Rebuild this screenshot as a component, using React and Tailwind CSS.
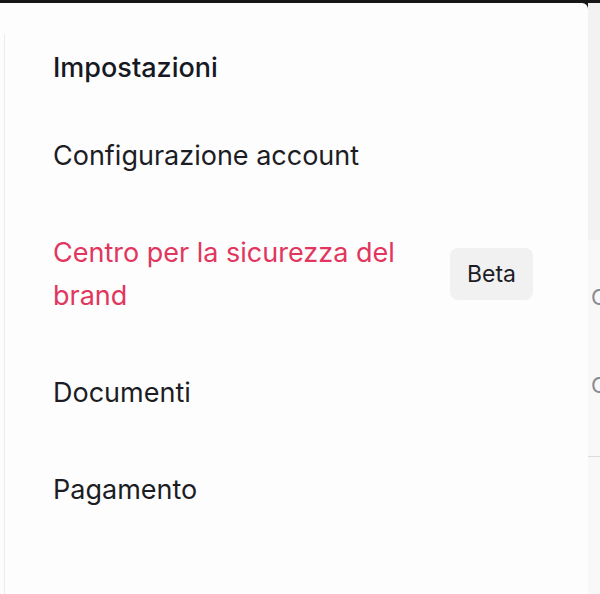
const items = [
  { label: 'Configurazione account' },
  { label: 'Centro per la sicurezza del brand', active: true, badge: 'Beta' },
  { label: 'Documenti' },
  { label: 'Pagamento' },
];

export default function App() {
  return (
    <div
      className="w-[600px] h-[594px] overflow-hidden bg-[#161616] flex flex-col"
      style={{ fontFamily: 'Inter, "Noto Sans", sans-serif' }}
    >
      <div className="h-[3px] shrink-0" />
      <div className="flex flex-1 min-h-0">
        {/* Settings panel */}
        <div className="w-[588px] shrink-0 bg-[#fdfdfd] rounded-tr-md pl-[4px] pt-[31px]">
          <div className="h-full border-l border-[#ececec] pl-[48px] pr-[55px]">
            <h2 className="text-[27px] leading-[43px] font-medium text-[#161823] pt-[12px] pb-[18px]">
              Impostazioni
            </h2>
            <ul>
              {items.map((item) => (
                <li
                  key={item.label}
                  className="flex items-center justify-between gap-6 py-[27px]"
                >
                  <span
                    className={
                      'text-[27px] leading-[43px] max-w-[360px] ' +
                      (item.active ? 'text-[#e2365e]' : 'text-[#1c1d24]')
                    }
                  >
                    {item.label}
                  </span>
                  {item.badge && (
                    <span className="shrink-0 w-[83px] h-[52px] flex items-center justify-center rounded-lg bg-[#f1f1f2] text-[23px] text-[#1c1d24]">
                      {item.badge}
                    </span>
                  )}
                </li>
              ))}
            </ul>
          </div>
        </div>

        {/* Content peeking on the right */}
        <div className="flex-1 flex flex-col overflow-hidden bg-[#f8f8f8]">
          <div className="h-[237px] bg-[#f2f2f2]" />
          <div className="pl-[3px] text-[22px] text-[#8a8b91] leading-none">
            <div className="pt-[46px]">Contenuti</div>
            <div className="pt-[66px]">Canali</div>
          </div>
          <div className="mt-[60px] h-px bg-[#dcdcdc]" />
        </div>
      </div>
    </div>
  );
}
